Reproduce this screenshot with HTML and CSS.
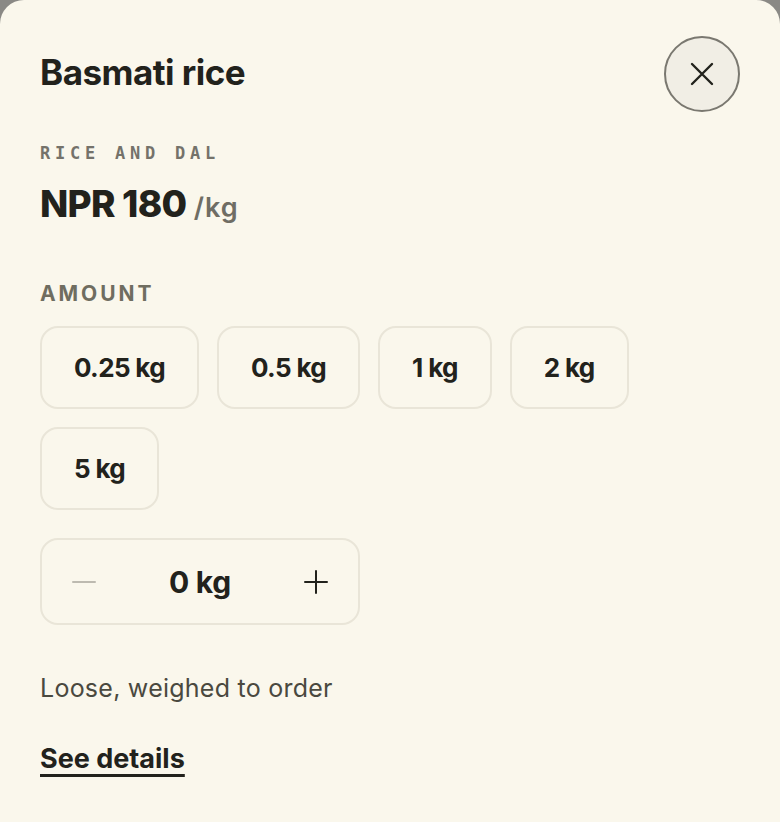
FILE: index.html
```html
<!DOCTYPE html>
<html lang="en">
<head>
    <meta charset="UTF-8">
    <meta name="viewport" content="width=device-width, initial-scale=1.0">
    <title>Basmati rice</title>
    <link rel="stylesheet" href="styles.css">
</head>
<body>
    <div class="sheet">
        <div class="sheet-header">
            <h1 class="title">Basmati rice</h1>
            <button class="close-btn" aria-label="Close">
                <svg width="26" height="26" viewBox="0 0 26 26" fill="none" stroke="#22221c" stroke-width="2.4" stroke-linecap="round">
                    <path d="M3 3 L23 23 M23 3 L3 23"/>
                </svg>
            </button>
        </div>

        <div class="category">RICE AND DAL</div>
        <div class="price">NPR 180 <span class="unit">/kg</span></div>

        <!-- amount options -->
        <div class="section-label">AMOUNT</div>
        <div class="options">
            <button class="option">0.25 kg</button>
            <button class="option">0.5 kg</button>
            <button class="option">1 kg</button>
            <button class="option">2 kg</button>
            <button class="option">5 kg</button>
        </div>

        <div class="stepper">
            <button class="step-btn" aria-label="Decrease">
                <svg width="24" height="24" viewBox="0 0 24 24" fill="none" stroke="#bdbab0" stroke-width="2" stroke-linecap="round">
                    <path d="M1 12 H23"/>
                </svg>
            </button>
            <span class="step-value">0 kg</span>
            <button class="step-btn" aria-label="Increase">
                <svg width="24" height="24" viewBox="0 0 24 24" fill="none" stroke="#22221c" stroke-width="2" stroke-linecap="round">
                    <path d="M1 12 H23 M12 1 V23"/>
                </svg>
            </button>
        </div>

        <p class="note">Loose, weighed to order</p>
        <a class="details-link" href="#">See details</a>
    </div>
</body>
</html>
```

FILE: styles.css
```css
body {
    margin: 0;
    background-color: #8a8985;
    font-family: Inter, "Noto Sans", sans-serif;
    color: #22221c;
}
.sheet {
    background-color: #faf7ec;
    border-radius: 24px 24px 0 0;
    min-height: 100vh;
    box-sizing: border-box;
    padding: 36px 40px 40px;
}
.sheet-header {
    display: flex;
    justify-content: space-between;
    align-items: center;
}
.title {
    margin: -4px 0 0;
    font-size: 35px;
    font-weight: 700;
    letter-spacing: -0.015em;
}
.close-btn {
    width: 76px;
    height: 76px;
    border-radius: 50%;
    border: 2px solid #7a7870;
    background-color: #f1eee5;
    display: flex;
    align-items: center;
    justify-content: center;
    padding: 0;
    cursor: pointer;
}
.category {
    margin-top: 31px;
    font-family: "DejaVu Sans Mono", monospace;
    font-size: 17px;
    font-weight: 700;
    letter-spacing: 0.28em;
    color: #74726a;
}
.price {
    margin-top: 18px;
    font-size: 37px;
    font-weight: 800;
    letter-spacing: -0.02em;
}
.unit {
    font-size: 27px;
    font-weight: 600;
    color: #6f6d64;
    letter-spacing: 0.04em;
}
.section-label {
    margin-top: 55px;
    font-size: 21px;
    font-weight: 700;
    letter-spacing: 0.14em;
    color: #6f6d60;
}
.options {
    margin-top: 20px;
    display: flex;
    flex-wrap: wrap;
    gap: 18px;
    max-width: 620px;
}
.option {
    height: 83px;
    padding: 0 32px;
    border: 2px solid #e9e5d8;
    border-radius: 18px;
    background-color: #faf7ec;
    font-family: Inter, sans-serif;
    font-size: 26px;
    font-weight: 700;
    letter-spacing: -0.025em;
    color: #22221c;
    cursor: pointer;
}
.stepper {
    margin-top: 28px;
    width: 320px;
    height: 87px;
    box-sizing: border-box;
    border: 2px solid #e9e5d8;
    border-radius: 18px;
    display: flex;
    align-items: center;
    justify-content: space-between;
    padding: 0 30px;
}
.step-btn {
    width: 24px;
    height: 24px;
    border: none;
    background: none;
    padding: 0;
    display: flex;
    align-items: center;
    justify-content: center;
    cursor: pointer;
}
.step-value {
    font-size: 30px;
    font-weight: 700;
    letter-spacing: -0.01em;
}
.note {
    margin: 48px 0 0;
    font-size: 25px;
    color: #4a493f;
    letter-spacing: 0.01em;
}
.details-link {
    display: inline-block;
    margin-top: 39px;
    font-size: 27px;
    font-weight: 700;
    color: #22221c;
    text-decoration: underline;
    text-decoration-thickness: 3px;
    text-underline-offset: 6px;
    letter-spacing: 0;
}
```
